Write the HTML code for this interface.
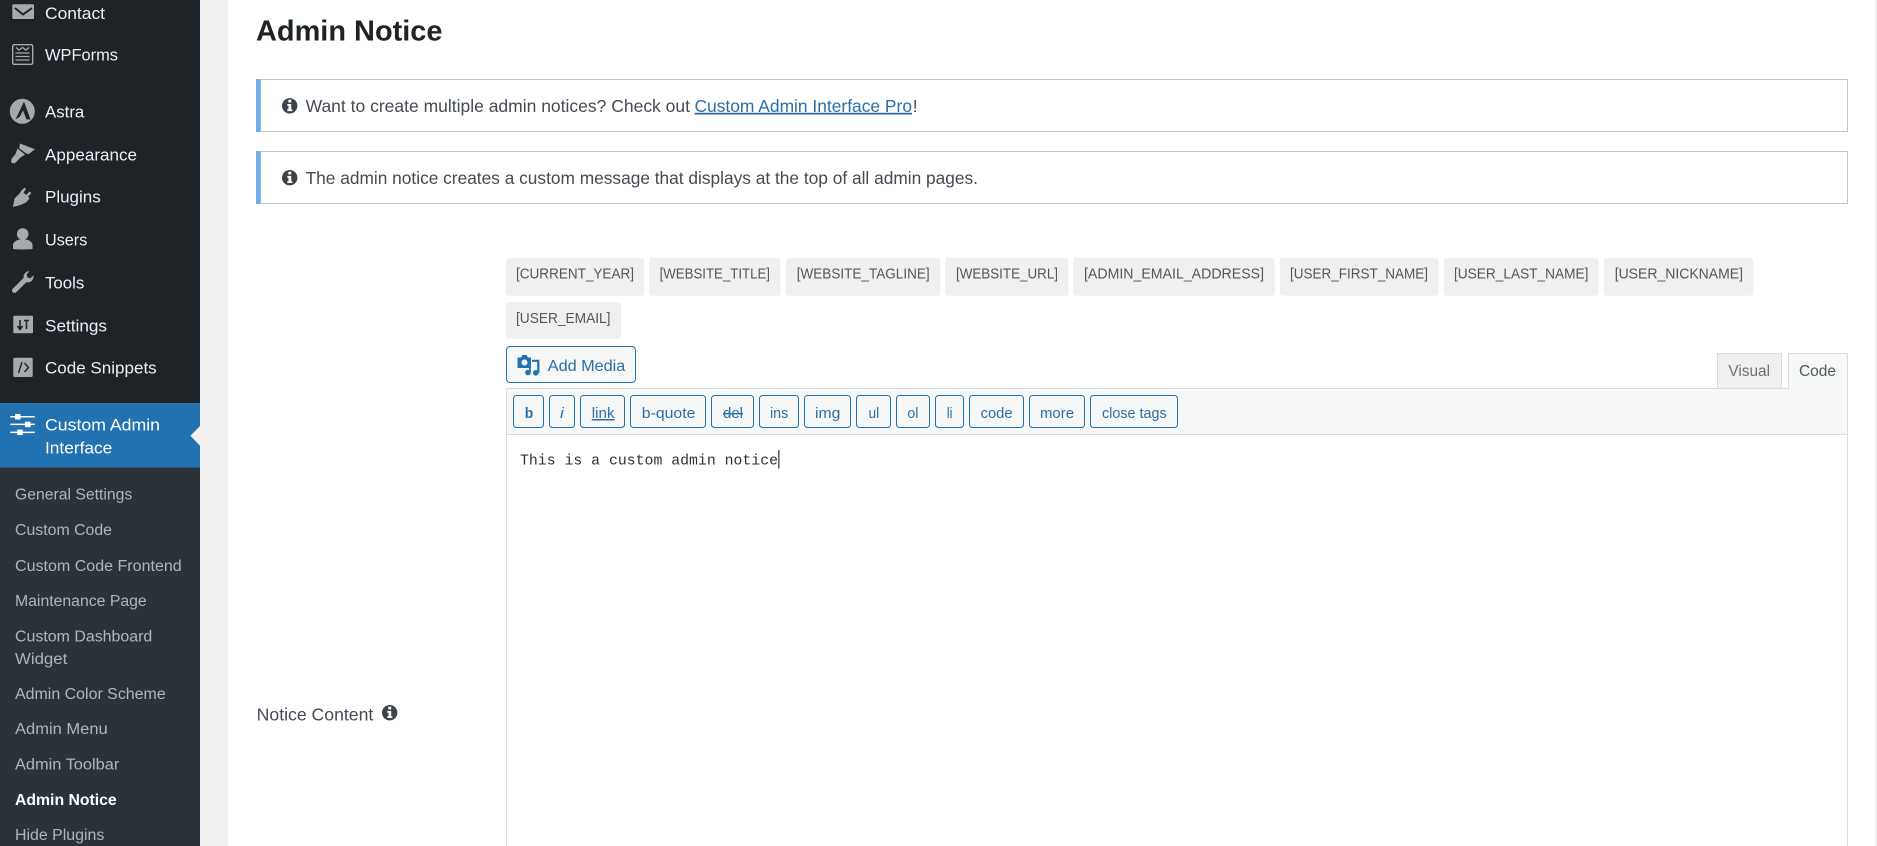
<!DOCTYPE html>
<html><head><meta charset="utf-8"><title>Admin Notice</title>
<style>
html,body{margin:0;padding:0;background:#fff;width:1877px;height:846px;overflow:hidden}
svg{display:block}
text{font-family:"Liberation Sans",sans-serif}
.m{font-size:17px;fill:#eaf0f5}
.s{font-size:15.5px;fill:#b0b5b8}
.t{font-size:14.6px;fill:#50575e}
.b{font-size:15px;fill:#2c6fa6;text-anchor:start}
.n{font-size:17.5px;fill:#444b52}
.tag{fill:#f0f0f0}
.btn{fill:#f6f7f7;stroke:#2271b1;stroke-width:1}
.ic{fill:#a7aaad}
</style></head><body>
<svg width="1877" height="846" viewBox="0 0 1877 846" xmlns="http://www.w3.org/2000/svg">
<rect width="1877" height="846" fill="#fff"/>
<rect x="200" width="28" height="846" fill="#f0f0f0"/>
<rect x="1875" width="2" height="846" fill="#f0f0f0"/>
<rect width="200" height="846" fill="#1d2327"/>
<rect y="467.5" width="200" height="379" fill="#2c3338"/>
<rect y="403" width="200" height="64.5" fill="#2271b1"/>
<path d="M200 426L190.5 435.8L200 445.7Z" fill="#f0f0f0"/>

<!-- menu icons -->
<rect class="ic" x="12.3" y="4.3" width="21.7" height="14.7" rx="1"/>
<path d="M15 8L23 14.5L32 8" fill="none" stroke="#1d2327" stroke-width="2"/>
<rect x="12.7" y="44.7" width="20" height="19.6" rx="1.5" fill="none" stroke="#a7aaad" stroke-width="1.4"/>
<path d="M16 47.5l3 2.5 3.5-2.5 3.5 2.5 3-2.5M15.5 53h14M15.5 56.5h14M15.5 60h14" fill="none" stroke="#a7aaad" stroke-width="1.3"/>
<circle class="ic" cx="22.3" cy="111.3" r="12.5"/>
<path d="M15.5 119.500L24 101.500L30.500 119.500L26.500 119.500L23 110.500L20 116.500Z" fill="#1d2327"/>
<path class="ic" d="M20 143.5L35 149.3L28.5 154.2L25.5 153L19.2 148.3ZM17.5 148.5L25 154.5L20 158L14.5 163.5L11 162.5L11.5 159L15.5 154Z"/>
<path class="ic" d="M13 207L14.5 198.5L19.5 193.5L21.5 190.5L24.5 187.5L26 189L23.5 192.5L26 195L29.5 191.5L31.5 193L28 196.5L29.5 198.5L26 202.5L20.5 205Z"/>
<circle class="ic" cx="22.7" cy="234" r="5.8"/>
<path class="ic" d="M13 249v-4c0-3 4-5 6.500-5.500h6.500c3 .5 6.500 2.500 6.500 5.500v4c-6 .6-13 .6-19.500 0Z"/>
<path d="M14.500 290.500L25.500 279.500" stroke="#a7aaad" stroke-width="5" stroke-linecap="round"/>
<path class="ic" d="M23.500 277c0-3.500 3-6 6-5.800l-3 3.300 1 3 3 .7 3-3c.6 4-2 7-5.500 7.200l-3-.6Z"/>
<rect class="ic" x="13.300" y="315.700" width="19.700" height="17.600" rx="1"/>
<path d="M20 320v9M17.500 326l2.500 3.500 2.500-3.500M26.500 329v-9M24 320.500h5" fill="none" stroke="#1d2327" stroke-width="1.600"/>
<rect class="ic" x="13.300" y="357.700" width="19.400" height="19.300" rx="1.500"/>
<path d="M22 362l-3.500 11M24.500 363l4 4.500-4 4.500" fill="none" stroke="#1d2327" stroke-width="1.400"/>
<g fill="#fff">
<rect x="10.300" y="416" width="24.500" height="1.500"/><rect x="10.300" y="423.600" width="24.500" height="1.500"/><rect x="10.300" y="431.600" width="24.500" height="1.500"/>
<rect x="15" y="414" width="5.500" height="5.500"/><rect x="25" y="421.700" width="5.500" height="5.500"/><rect x="17.300" y="429.600" width="5.500" height="5.500"/>
</g>

<!-- menu text -->
<text class="m" x="45" y="18.800" textLength="60" lengthAdjust="spacingAndGlyphs">Contact</text>
<text class="m" x="45" y="60.300" textLength="73" lengthAdjust="spacingAndGlyphs">WPForms</text>
<text class="m" x="45" y="117.500" textLength="39.300" lengthAdjust="spacingAndGlyphs">Astra</text>
<text class="m" x="45" y="160.300" textLength="92" lengthAdjust="spacingAndGlyphs">Appearance</text>
<text class="m" x="45" y="202.300" textLength="55.700" lengthAdjust="spacingAndGlyphs">Plugins</text>
<text class="m" x="45" y="245.300" textLength="42.300" lengthAdjust="spacingAndGlyphs">Users</text>
<text class="m" x="45" y="288.300" textLength="39.300" lengthAdjust="spacingAndGlyphs">Tools</text>
<text class="m" x="45" y="331.300" textLength="62" lengthAdjust="spacingAndGlyphs">Settings</text>
<text class="m" x="45" y="373.300" textLength="111.700" lengthAdjust="spacingAndGlyphs">Code Snippets</text>
<text class="m" x="45" y="430.300" textLength="115" lengthAdjust="spacingAndGlyphs" style="fill:#fff">Custom Admin</text>
<text class="m" x="45" y="453.500" textLength="67.300" lengthAdjust="spacingAndGlyphs" style="fill:#fff">Interface</text>

<text class="s" x="15" y="499.500" textLength="117.300" lengthAdjust="spacingAndGlyphs">General Settings</text>
<text class="s" x="15" y="534.800" textLength="97" lengthAdjust="spacingAndGlyphs">Custom Code</text>
<text class="s" x="15" y="571" textLength="166.700" lengthAdjust="spacingAndGlyphs">Custom Code Frontend</text>
<text class="s" x="15" y="606" textLength="131.700" lengthAdjust="spacingAndGlyphs">Maintenance Page</text>
<text class="s" x="15" y="641.300" textLength="137.300" lengthAdjust="spacingAndGlyphs">Custom Dashboard</text>
<text class="s" x="15" y="664" textLength="52.300" lengthAdjust="spacingAndGlyphs">Widget</text>
<text class="s" x="15" y="699" textLength="150.700" lengthAdjust="spacingAndGlyphs">Admin Color Scheme</text>
<text class="s" x="15" y="734" textLength="92.700" lengthAdjust="spacingAndGlyphs">Admin Menu</text>
<text class="s" x="15" y="769.500" textLength="104.300" lengthAdjust="spacingAndGlyphs">Admin Toolbar</text>
<text class="s" x="15" y="805" textLength="101.700" lengthAdjust="spacingAndGlyphs" style="fill:#fff;font-weight:700">Admin Notice</text>
<text class="s" x="15" y="840" textLength="89.300" lengthAdjust="spacingAndGlyphs">Hide Plugins</text>

<!-- heading -->
<text x="256" y="40.700" font-size="28.500" font-weight="700" fill="#1d2327" textLength="186.500" lengthAdjust="spacingAndGlyphs">Admin Notice</text>

<!-- notices -->
<rect x="256.500" y="79.500" width="1591" height="52" fill="#fff" stroke="#c3c4c7"/>
<rect x="256" y="79" width="4.800" height="53" fill="#72aee6"/>
<rect x="256.500" y="151.500" width="1591" height="52" fill="#fff" stroke="#c3c4c7"/>
<rect x="256" y="151" width="4.800" height="53" fill="#72aee6"/>
<circle cx="289.700" cy="105.800" r="7.700" fill="#3c434a"/>
<path d="M288.300 99.800h2.900v2.700h-2.900ZM287.300 104h3.900v5.300h1.100v1.800h-5v-1.800h1.200v-3.500h-1.200Z" fill="#fff"/>
<circle cx="289.700" cy="177.700" r="7.700" fill="#3c434a"/>
<path d="M288.300 171.700h2.900v2.700h-2.900ZM287.300 175.900h3.900v5.300h1.100v1.800h-5v-1.800h1.200v-3.500h-1.200Z" fill="#fff"/>
<text class="n" x="305.600" y="111.800" textLength="384.400" lengthAdjust="spacingAndGlyphs">Want to create multiple admin notices? Check out</text>
<text class="n" x="694.500" y="111.800" textLength="217.500" lengthAdjust="spacingAndGlyphs" style="fill:#2c6fa6;text-decoration:underline">Custom Admin Interface Pro</text>
<text class="n" x="912.800" y="111.800">!</text>
<text class="n" x="305.600" y="183.800" textLength="672.400" lengthAdjust="spacingAndGlyphs">The admin notice creates a custom message that displays at the top of all admin pages.</text>

<!-- label -->
<text class="n" x="256.700" y="720.700" textLength="116.600" lengthAdjust="spacingAndGlyphs">Notice Content</text>
<circle cx="389.700" cy="712.700" r="7.700" fill="#3c434a"/>
<path d="M388.300 706.700h2.900v2.700h-2.900ZM387.300 710.900h3.900v5.300h1.100v1.800h-5v-1.800h1.200v-3.500h-1.200Z" fill="#fff"/>

<!-- tags -->
<g>
<rect class="tag" x="506" y="258" width="138" height="37.700" rx="3"/>
<rect class="tag" x="649" y="258" width="131.600" height="37.700" rx="3"/>
<rect class="tag" x="786" y="258" width="154.500" height="37.700" rx="3"/>
<rect class="tag" x="945" y="258" width="123.600" height="37.700" rx="3"/>
<rect class="tag" x="1073" y="258" width="201.700" height="37.700" rx="3"/>
<rect class="tag" x="1280" y="258" width="158.700" height="37.700" rx="3"/>
<rect class="tag" x="1444" y="258" width="154.700" height="37.700" rx="3"/>
<rect class="tag" x="1604" y="258" width="149.300" height="37.700" rx="3"/>
<rect class="tag" x="506" y="302" width="115" height="36.700" rx="3"/>
</g>
<text class="t" x="516" y="278.400" textLength="118" lengthAdjust="spacingAndGlyphs">[CURRENT_YEAR]</text>
<text class="t" x="659.600" y="278.400" textLength="110.400" lengthAdjust="spacingAndGlyphs">[WEBSITE_TITLE]</text>
<text class="t" x="796.700" y="278.400" textLength="133" lengthAdjust="spacingAndGlyphs">[WEBSITE_TAGLINE]</text>
<text class="t" x="956" y="278.400" textLength="102" lengthAdjust="spacingAndGlyphs">[WEBSITE_URL]</text>
<text class="t" x="1084" y="278.400" textLength="180" lengthAdjust="spacingAndGlyphs">[ADMIN_EMAIL_ADDRESS]</text>
<text class="t" x="1290" y="278.400" textLength="138" lengthAdjust="spacingAndGlyphs">[USER_FIRST_NAME]</text>
<text class="t" x="1454" y="278.400" textLength="134.400" lengthAdjust="spacingAndGlyphs">[USER_LAST_NAME]</text>
<text class="t" x="1614.700" y="278.400" textLength="128.300" lengthAdjust="spacingAndGlyphs">[USER_NICKNAME]</text>
<text class="t" x="516" y="323" textLength="94.500" lengthAdjust="spacingAndGlyphs">[USER_EMAIL]</text>

<!-- add media -->
<rect class="btn" x="506.500" y="346.500" width="129" height="36" rx="3.500"/>
<path d="M521 357.500l1.500-2.500h4l1.500 2.500h3v10.500h-13.500v-10.500Z M524.500 359.500a3 3 0 1 0 .01 0Z" fill="#2271b1" fill-rule="evenodd"/>
<path d="M532 360.800h6.300v12" fill="none" stroke="#2271b1" stroke-width="2.200"/>
<circle cx="528" cy="372.500" r="2.800" fill="#2271b1"/>
<circle cx="535.800" cy="372.800" r="2.800" fill="#2271b1"/>
<path d="M530 372v-4.500" stroke="#2271b1" stroke-width="1.800"/>
<text class="b" x="547.800" y="371" textLength="77.500" lengthAdjust="spacingAndGlyphs" style="font-size:16px">Add Media</text>

<!-- tabs -->
<rect x="1717.500" y="353.500" width="64" height="35" fill="#f0f0f1" stroke="#dcdcde"/>
<text x="1728.400" y="376" font-size="16" fill="#6a7076" textLength="41.600" lengthAdjust="spacingAndGlyphs">Visual</text>

<!-- editor -->
<rect x="506.500" y="388.500" width="1341" height="470" fill="#fff" stroke="#dcdcde"/>
<rect x="507" y="389" width="1340" height="45.500" fill="#f6f7f7"/>
<path d="M507 434.500H1847" stroke="#dcdcde"/>
<path d="M1788.500 389.500V353.500H1847.500V389" fill="#f6f7f7" stroke="#dcdcde"/>
<rect x="1789" y="387" width="58" height="3" fill="#f6f7f7"/>
<text x="1799" y="376" font-size="16" fill="#50575e" textLength="37" lengthAdjust="spacingAndGlyphs">Code</text>

<!-- toolbar -->
<rect class="btn" x="513.500" y="395.500" width="30" height="32" rx="3"/>
<rect class="btn" x="549.500" y="395.500" width="25" height="32" rx="3"/>
<rect class="btn" x="580.500" y="395.500" width="44" height="32" rx="3"/>
<rect class="btn" x="630.500" y="395.500" width="75" height="32" rx="3"/>
<rect class="btn" x="711.500" y="395.500" width="42" height="32" rx="3"/>
<rect class="btn" x="759.500" y="395.500" width="39" height="32" rx="3"/>
<rect class="btn" x="804.500" y="395.500" width="46" height="32" rx="3"/>
<rect class="btn" x="856.500" y="395.500" width="34" height="32" rx="3"/>
<rect class="btn" x="896.500" y="395.500" width="33" height="32" rx="3"/>
<rect class="btn" x="935.500" y="395.500" width="28" height="32" rx="3"/>
<rect class="btn" x="969.500" y="395.500" width="54" height="32" rx="3"/>
<rect class="btn" x="1029.500" y="395.500" width="55" height="32" rx="3"/>
<rect class="btn" x="1090.500" y="395.500" width="87" height="32" rx="3"/>
<text class="b" x="524.800" y="418" font-weight="700" textLength="8.500" lengthAdjust="spacingAndGlyphs">b</text>
<text class="b" x="560" y="418" font-style="italic" textLength="3.800" lengthAdjust="spacingAndGlyphs">i</text>
<text class="b" x="591.800" y="418" textLength="22.800" lengthAdjust="spacingAndGlyphs" text-decoration="underline">link</text>
<text class="b" x="641.800" y="418" textLength="53.600" lengthAdjust="spacingAndGlyphs">b-quote</text>
<text class="b" x="723" y="418" textLength="20" lengthAdjust="spacingAndGlyphs" text-decoration="line-through">del</text>
<text class="b" x="770" y="418" textLength="18.300" lengthAdjust="spacingAndGlyphs">ins</text>
<text class="b" x="815" y="418" textLength="25.400" lengthAdjust="spacingAndGlyphs">img</text>
<text class="b" x="868.500" y="418" textLength="10.700" lengthAdjust="spacingAndGlyphs">ul</text>
<text class="b" x="907.400" y="418" textLength="11" lengthAdjust="spacingAndGlyphs">ol</text>
<text class="b" x="946.700" y="418" textLength="5.800" lengthAdjust="spacingAndGlyphs">li</text>
<text class="b" x="980.600" y="418" textLength="32" lengthAdjust="spacingAndGlyphs">code</text>
<text class="b" x="1040" y="418" textLength="34" lengthAdjust="spacingAndGlyphs">more</text>
<text class="b" x="1102" y="418" textLength="64.700" lengthAdjust="spacingAndGlyphs">close tags</text>

<!-- code text -->
<text x="520" y="464.600" font-size="14.800" fill="#2c3338" style="font-family:'Liberation Mono',monospace" textLength="258" lengthAdjust="spacingAndGlyphs">This is a custom admin notice</text>
<rect x="778.300" y="450" width="1.100" height="18.600" fill="#1d2327"/>
</svg>
</body></html>
